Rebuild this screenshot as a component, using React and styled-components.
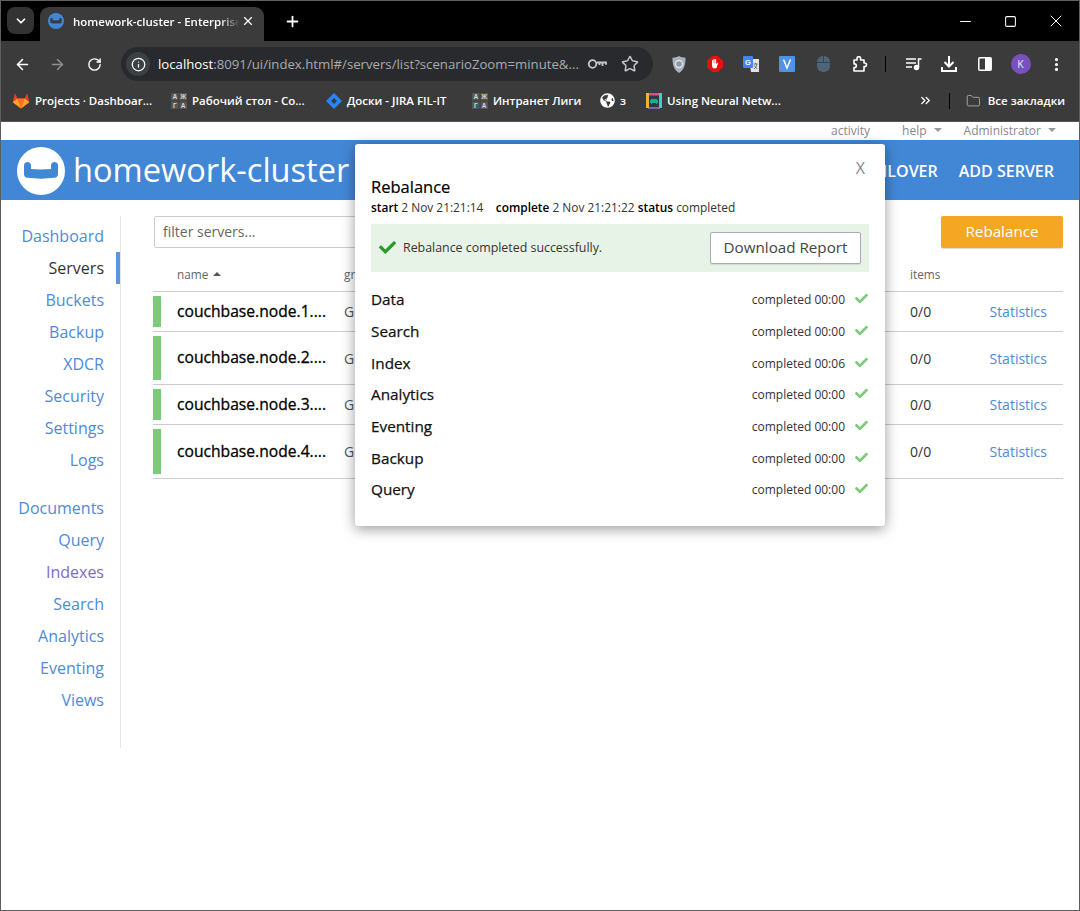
import React from 'react';
import styled, { createGlobalStyle } from 'styled-components';
import { ArrowLeft, ArrowRight, RotateCw, Info, Star, ChevronDown, Plus, X, Minus, Square, EllipsisVertical, ChevronsRight, Folder } from 'lucide-react';
import { FaCheck, FaGlobeAmericas } from 'react-icons/fa';

const GlobalStyle = createGlobalStyle`
  html, body { margin: 0; padding: 0; background: #fff; }
  body { font-family: "Open Sans", "Noto Sans", sans-serif; }
  * { box-sizing: border-box; }
`;

const Couch = ({ size, bg, fg }) => (
  <svg width={size} height={size} viewBox="0 0 48 48">
    <circle cx="24" cy="24" r="24" fill={bg} />
    <path d="M7 18.5C7 16.2 8.5 15 10.5 15S14 16.2 14 18.5V22c6.5.6 13.5.6 20 0v-3.5c0-2.3 1.500-3.500 3.500-3.500S41 16.200 41 18.500V27c0 2.200-1.200 3.500-3.300 3.800-9 1.100-18.400 1.100-27.400 0C8.200 30.500 7 29.200 7 27z" fill={fg} />
  </svg>
);

const Gitlab = () => (
  <svg width="18" height="17" viewBox="0 0 18 17">
    <path d="M9 16.500 0.700 10.300 2.900 1 5.400 6.500h7.200L15.100 1l2.200 9.300z" fill="#e24329" />
    <path d="M9 16.500 5.400 6.500h7.200z" fill="#fc6d26" />
    <path d="M9 16.500 0.700 10.300 5.400 6.500zM9 16.500l8.300-6.200-4.700-3.800z" fill="#fca326" />
  </svg>
);

const Liga = () => (
  <svg width="16" height="16" viewBox="0 0 16 16" fontFamily="Liberation Sans, sans-serif" fontSize="6.5" fontWeight="700" fill="#d6d6d6" textAnchor="middle">
    <rect width="7.5" height="7.5" fill="#555" />
    <rect x="8.5" width="7.5" height="7.5" fill="#555" />
    <rect y="8.5" width="7.5" height="7.5" fill="#555" />
    <rect x="8.5" y="8.5" width="7.5" height="7.5" fill="#555" />
    <text x="3.8" y="6.2">A</text>
    <text x="12.2" y="6.2">Ж</text>
    <text x="3.8" y="14.7">Г</text>
    <text x="12.2" y="14.7">А</text>
  </svg>
);

const Jira = () => (
  <svg width="16" height="16" viewBox="0 0 16 16">
    <path d="M8 0l8 8-8 8-8-8z" fill="#2684ff" />
    <path d="M8 5l3 3-3 3-3-3z" fill="#3b3b3b" />
  </svg>
);

const Invader = () => (
  <svg width="16" height="16" viewBox="0 0 16 16">
    <rect width="16" height="16" fill="#2c3a3c" />
    <rect width="16" height="2.5" fill="#d94f8a" />
    <rect y="14" x="2" width="12" height="2" fill="#8c5bb5" />
    <rect width="3" height="15" fill="#f0b13c" />
    <rect x="13" width="3" height="15" fill="#3fd0c0" />
    <path d="M5 6h6v1h1v3H4V7h1zM5 10h1v1H5zM10 10h1v1h-1z" fill="#1fa88a" />
  </svg>
);

const Key = () => (
  <svg width="20" height="12" viewBox="0 0 20 12" fill="none" stroke="#c7c7c7" strokeWidth="1.8">
    <circle cx="5.5" cy="6" r="3.8" />
    <path d="M9.5 4.500H19v2.200M15.500 4.500v3.500M12.500 4.500v2.500" />
  </svg>
);

const Shield = () => (
  <svg width="14" height="17" viewBox="0 0 14 17">
    <path d="M7 0c2 1.200 4 1.700 6.500 1.700C13.700 8.500 12 14 7 17 2 14 .3 8.500 .5 1.700 3 1.700 5 1.200 7 0z" fill="#aab2bd" />
    <circle cx="7" cy="8" r="3.5" fill="#8d96a3" stroke="#dfe3e8" strokeWidth="1.4" />
  </svg>
);

const Hand = () => (
  <svg width="16" height="16" viewBox="0 0 16 16">
    <path d="M5 0h6l5 5v6l-5 5H5l-5-5V5z" fill="#e8110f" />
    <path d="M5 8V4.500c0-.8 1.100-.8 1.100 0V7h.3V3.300c0-.8 1.200-.8 1.200 0V7h.3V3.700c0-.8 1.200-.8 1.200 0V8l.9-1c.6-.6 1.300 0 .9.600L9.800 11.500c-.4.700-1 1-1.800 1-2 0-3-1.200-3-3z" fill="#fff" />
  </svg>
);

const Translate = () => (
  <svg width="16" height="16" viewBox="0 0 16 16">
    <path d="M6 3h10v13H8z" fill="#dfe3e8" />
    <rect width="10" height="12" rx="1" fill="#4285f4" />
    <text x="5" y="8.5" fontFamily="Liberation Sans, sans-serif" fontSize="7.5" fontWeight="700" fill="#fff" textAnchor="middle">G</text>
    <path d="M10.500 8h4M12.500 7v1M11 13c1.500-1 2.500-2.500 2.800-5M11.500 9.500c.6 1.500 1.500 2.500 2.800 3" fill="none" stroke="#555" strokeWidth=".8" />
  </svg>
);

const Vimium = () => (
  <svg width="16" height="16" viewBox="0 0 16 16">
    <rect width="16" height="16" rx="1" fill="#4f94e4" />
    <path d="M4.500 3.500 8 12l3.500-8.500" fill="none" stroke="#fff" strokeWidth="1.5" />
  </svg>
);

const Mouse = () => (
  <svg width="13" height="16" viewBox="0 0 13 16">
    <rect width="13" height="16" rx="6" fill="#4d6579" />
    <path d="M6.500 0v6.500M0 6.500h13" stroke="#3b3b3b" strokeWidth=".8" />
  </svg>
);

const Puzzle = () => (
  <svg width="17" height="16" viewBox="0 0 17 16" fill="none" stroke="#fff" strokeWidth="1.6" strokeLinejoin="round">
    <path d="M3 4h3V2.500a1.800 1.800 0 0 1 3.600 0V4H13v3h.7a1.800 1.800 0 0 1 0 3.600H13V15H3v-3.500h.5a1.800 1.800 0 0 0 0-3.600H3z" />
  </svg>
);

const Queue = () => (
  <svg width="16" height="14" viewBox="0 0 16 14" fill="none" stroke="#fff" strokeWidth="1.5">
    <path d="M0 2h10M0 6h10M0 10h6M12.500 10V2h3" />
    <circle cx="10.500" cy="10.500" r="2" fill="#fff" />
  </svg>
);

const DownloadIcon = () => (
  <svg width="16" height="16" viewBox="0 0 16 16" fill="none" stroke="#fff" strokeWidth="2">
    <path d="M8 0v10M3.500 6l4.500 4.500L12.500 6M1 11v4h14v-4" />
  </svg>
);

const SidePanel = () => (
  <svg width="14" height="14" viewBox="0 0 14 14">
    <rect x=".8" y=".8" width="12.4" height="12.4" rx="1" fill="none" stroke="#fff" strokeWidth="1.5" />
    <rect x="7" y="1" width="6" height="12" fill="#fff" />
  </svg>
);

const Window = styled.div`
  width: 1080px;
  height: 911px;
  border: 1px solid #5f5f5f;
  display: flex;
  flex-direction: column;
  position: relative;
  overflow: hidden;
  background: #fff;
`;

const TabStrip = styled.div`
  height: 40px;
  background: #000;
  display: flex;
  align-items: flex-end;
  padding-left: 6px;
  flex: none;
`;

const TabSwitcher = styled.div`
  width: 27px;
  height: 27px;
  margin-bottom: 7px;
  border-radius: 8px;
  background: #333;
  color: #fff;
  display: flex;
  align-items: center;
  justify-content: center;
`;

const Tab = styled.div`
  width: 224px;
  height: 34px;
  margin-left: 6px;
  background: #3b3b3b;
  border-radius: 9px 9px 0 0;
  display: flex;
  align-items: center;
  padding: 0 8px 6px 8px;
  color: #fff;
`;

const TabTitle = styled.div`
  width: 168px;
  margin-left: 9px;
  font-size: 11.5px;
  font-weight: 600;
  white-space: nowrap;
  overflow: hidden;
  mask-image: linear-gradient(to right, #000 88%, transparent 99%);
`;

const NewTab = styled.div`
  height: 34px;
  margin-left: 20px;
  padding-bottom: 6px;
  color: #fff;
  display: flex;
  align-items: center;
`;

const WindowControls = styled.div`
  margin-left: auto;
  height: 40px;
  display: flex;
  align-items: center;
  color: #fff;
`;

const WindowControl = styled.div`
  width: 45.5px;
  display: flex;
  justify-content: center;
`;

const Toolbar = styled.div`
  height: 41px;
  background: #3b3b3b;
  display: flex;
  align-items: center;
  flex: none;
  padding: 5px 0 0 4px;
`;

const NavButton = styled.div`
  width: 35px;
  display: flex;
  justify-content: center;
  color: ${p => (p.$dim ? '#8f8f8f' : '#fff')};
  margin-right: ${p => p.$gap || 0}px;
`;

const Omnibox = styled.div`
  width: 532px;
  height: 34px;
  margin-left: 9px;
  border-radius: 17px;
  background: #282a2d;
  display: flex;
  align-items: center;
  padding: 0 14px 0 5px;
  font-size: 13.2px;
  color: #a9abad;
`;

const InfoBubble = styled.div`
  width: 24px;
  height: 24px;
  border-radius: 50%;
  background: #3c3f43;
  color: #fff;
  display: flex;
  align-items: center;
  justify-content: center;
  margin-right: 8px;
  flex: none;
`;

const Url = styled.div`
  flex: 1;
  white-space: nowrap;
  overflow: hidden;
  width: 0;
`;

const Host = styled.span`
  color: #fff;
`;

const OmniIcons = styled.div`
  display: flex;
  align-items: center;
  gap: 14px;
  margin-left: 6px;
  color: #c7c7c7;
`;

const Extensions = styled.div`
  margin-left: 8px;
  display: flex;
  align-items: center;
  flex: 1;
`;

const Extension = styled.div`
  width: ${p => p.$w || 36}px;
  display: flex;
  justify-content: center;
  align-items: center;
  color: #fff;
  flex: none;
`;

const Divider = styled.div`
  width: 1px;
  height: 16px;
  background: #000;
  flex: none;
`;

const Avatar = styled.div`
  width: 20px;
  height: 20px;
  border-radius: 50%;
  background: #7a50c0;
  color: #f0e8ff;
  font-size: 10.5px;
  display: flex;
  align-items: center;
  justify-content: center;
`;

const Bookmarks = styled.div`
  height: 40px;
  background: #3b3b3b;
  border-bottom: 1px solid #555;
  display: flex;
  align-items: center;
  flex: none;
  padding: 0 0 2px 11px;
  color: #fff;
  font-size: 11.5px;
  font-weight: 600;
`;

const Bookmark = styled.div`
  display: flex;
  align-items: center;
  gap: ${p => p.$gap || 5}px;
  white-space: nowrap;
  width: ${p => p.$w}px;
  flex: none;
`;

const BookmarkTail = styled.div`
  margin-left: auto;
  display: flex;
  align-items: center;
  padding-right: 14px;
`;

const Page = styled.div`
  flex: 1;
  display: flex;
  flex-direction: column;
  color: #000;
`;

const TopLinks = styled.div`
  height: 18px;
  display: flex;
  justify-content: flex-end;
  align-items: center;
  padding: 0 23px 2px 0;
  font-size: 12px;
  color: #888;
`;

const TopLink = styled.span`
  display: flex;
  align-items: center;
  gap: 7px;
  margin-right: ${p => p.$gap || 0}px;
`;

const Caret = styled.i`
  display: inline-block;
  width: 0;
  height: 0;
  border-left: 4px solid transparent;
  border-right: 4px solid transparent;
  border-bottom: ${p => (p.$up ? '4px solid #555' : 'none')};
  border-top: ${p => (p.$up ? 'none' : '4px solid #999')};
`;

const Header = styled.header`
  height: 60px;
  background: #4287d6;
  display: flex;
  align-items: center;
  padding: 2px 25px 0 16px;
  color: #fff;
`;

const ClusterName = styled.div`
  font-size: 32.6px;
  margin-left: 8px;
  line-height: 1;
  margin-top: -2px;
`;

const HeaderActions = styled.div`
  margin-left: auto;
  display: flex;
  gap: 21px;
  font-size: 16px;
  font-weight: 600;
`;

const Body = styled.div`
  flex: 1;
  display: flex;
  padding-top: 16px;
`;

const Sidebar = styled.nav`
  width: 120px;
  height: 532px;
  padding-top: 4px;
  border-right: 1px solid #e6e6e6;
  flex: none;
  text-align: right;
`;

const NavGroup = styled.div`
  margin-bottom: 16px;
`;

const NavItem = styled.div`
  height: 32px;
  line-height: 32px;
  font-size: 16px;
  padding-right: 16px;
  color: ${p => (p.$active ? '#333' : p.$purple ? '#7e6bc9' : '#4f8ad8')};
  position: relative;
  ${p => p.$active && `
    &::after {
      content: '';
      position: absolute;
      right: 0;
      top: 0;
      width: 4px;
      height: 32px;
      background: #5e94dc;
    }
  `}
`;

const Main = styled.main`
  width: 910px;
  margin-left: 32px;
  flex: none;
`;

const Controls = styled.div`
  display: flex;
  justify-content: space-between;
  align-items: flex-start;
`;

const Filter = styled.div`
  width: 400px;
  height: 32px;
  margin-left: 1px;
  border: 1px solid #ccc;
  border-radius: 2px;
  font-size: 14px;
  color: #666;
  padding: 0 8px;
  line-height: 29px;
`;

const RebalanceButton = styled.div`
  width: 122px;
  height: 32px;
  background: #f5a623;
  border-radius: 2px;
  box-shadow: 0 1px 1px rgba(0, 0, 0, .15);
  color: #fff;
  font-size: 15.2px;
  text-align: center;
  line-height: 30px;
`;

const columns = '24px 167px 566px 79px 1fr';

const HeadRow = styled.div`
  display: grid;
  grid-template-columns: ${columns};
  height: 44px;
  align-items: center;
  padding-top: 8px;
  border-bottom: 1px solid #ccc;
  font-size: 11.8px;
  color: #666;
`;

const NameHead = styled.div`
  grid-column: 2;
  display: flex;
  align-items: center;
  gap: 5px;
`;

const Row = styled.div`
  display: grid;
  grid-template-columns: ${columns};
  height: ${p => p.$h}px;
  padding: 4px 0;
  border-bottom: 1px solid #ccc;
  align-items: center;
  font-size: 14px;
`;

const Status = styled.div`
  width: 8px;
  height: 100%;
  background: #7fc97a;
`;

const NodeName = styled.div`
  font-size: 15.65px;
  font-weight: 500;
  -webkit-text-stroke: .3px #000;
  white-space: nowrap;
  margin-top: -2px;
`;

const Group = styled.div`
  color: #555;
`;

const Stat = styled.div`
  color: #333;
`;

const StatsLink = styled.div`
  color: #4f8ad8;
  text-align: right;
  padding-right: 16px;
`;

const Modal = styled.div`
  position: absolute;
  left: 354px;
  top: 143px;
  width: 530px;
  height: 382px;
  background: #fff;
  border-radius: 3px;
  box-shadow: 0 3px 14px rgba(0, 0, 0, .4);
  padding: 33px 16px 0;
  color: #000;
`;

const CloseMark = styled.div`
  position: absolute;
  right: 20px;
  top: 13px;
  font-size: 16px;
  color: #888;
`;

const ModalTitle = styled.h2`
  margin: 0;
  font-size: 16.5px;
  font-weight: 400;
  line-height: 19px;
  -webkit-text-stroke: .2px #000;
`;

const Meta = styled.div`
  margin-top: 3px;
  font-size: 11.9px;
  line-height: 16px;
  color: #333;
  white-space: pre;
`;

const MetaLabel = styled.b`
  font-weight: 600;
  color: #000;
`;

const Alert = styled.div`
  margin-top: 9px;
  height: 48px;
  background: #e8f3e8;
  display: flex;
  align-items: center;
  padding: 0 8px;
  font-size: 12.4px;
  color: #333;
  gap: 7px;
`;

const AlertText = styled.span`
  margin-top: -2px;
`;

const AlertCheck = styled.span`
  color: #2a9a2a;
  display: flex;
  margin-top: -1px;
`;

const ReportButton = styled.div`
  margin-left: auto;
  width: 151px;
  height: 32px;
  border: 1px solid #aab;
  border-radius: 2px;
  background: #fff;
  box-shadow: 0 1px 1px rgba(0, 0, 0, .1);
  font-size: 15.2px;
  text-align: center;
  line-height: 29px;
  color: #444;
`;

const Services = styled.div`
  margin-top: 11.4px;
`;

const ServiceRow = styled.div`
  height: 31.7px;
  display: flex;
  align-items: center;
  justify-content: space-between;
`;

const ServiceName = styled.div`
  font-size: 15.3px;
  font-weight: 500;
  -webkit-text-stroke: .25px #111;
  color: #111;
`;

const ServiceState = styled.div`
  display: flex;
  align-items: center;
  gap: 10px;
  padding-right: 1px;
  margin-top: 1px;
  font-size: 12px;
  color: #333;
`;

const ServiceCheck = styled.span`
  color: #7fc97a;
  display: flex;
  margin-top: -2px;
`;

const bookmarks = [
  { w: 159, icon: <Gitlab />, label: 'Projects · Dashboar...' },
  { w: 155, icon: <Liga />, label: 'Рабочий стол - Co...' },
  { w: 146, icon: <Jira />, label: 'Доски - JIRA FIL-IT' },
  { w: 128, icon: <Liga />, label: 'Интранет Лиги' },
  { w: 46, icon: <FaGlobeAmericas size={15} />, label: 'з' },
  { w: 200, icon: <Invader />, label: 'Using Neural Netw...' },
];

const navTop = ['Dashboard', 'Servers', 'Buckets', 'Backup', 'XDCR', 'Security', 'Settings', 'Logs'];
const navBottom = ['Documents', 'Query', 'Indexes', 'Search', 'Analytics', 'Eventing', 'Views'];

const nodes = [
  { name: 'couchbase.node.1....', h: 40 },
  { name: 'couchbase.node.2....', h: 53 },
  { name: 'couchbase.node.3....', h: 40 },
  { name: 'couchbase.node.4....', h: 54 },
];

const services = [
  ['Data', '00:00'],
  ['Search', '00:00'],
  ['Index', '00:06'],
  ['Analytics', '00:00'],
  ['Eventing', '00:00'],
  ['Backup', '00:00'],
  ['Query', '00:00'],
];

const BrowserChrome = () => (
  <>
    <TabStrip>
      <TabSwitcher><ChevronDown size={14} strokeWidth={3} /></TabSwitcher>
      <Tab>
        <Couch size={16} bg="#4287d6" fg="#3b3b3b" />
        <TabTitle>homework-cluster - Enterprise</TabTitle>
        <X size={14} strokeWidth={2} />
      </Tab>
      <NewTab><Plus size={17} strokeWidth={2.5} /></NewTab>
      <WindowControls>
        <WindowControl><Minus size={17} strokeWidth={1.4} /></WindowControl>
        <WindowControl><Square size={13} strokeWidth={1.9} /></WindowControl>
        <WindowControl><X size={20} strokeWidth={1.2} /></WindowControl>
      </WindowControls>
    </TabStrip>
    <Toolbar>
      <NavButton><ArrowLeft size={17} strokeWidth={2.2} /></NavButton>
      <NavButton $dim $gap={2}><ArrowRight size={17} strokeWidth={2.2} /></NavButton>
      <NavButton><RotateCw size={15} strokeWidth={2.2} /></NavButton>
      <Omnibox>
        <InfoBubble><Info size={15} strokeWidth={2} /></InfoBubble>
        <Url><Host>localhost</Host>:8091/ui/index.html#/servers/list?scenarioZoom=minute&...</Url>
        <OmniIcons>
          <Key />
          <Star size={18} strokeWidth={2} />
        </OmniIcons>
      </Omnibox>
      <Extensions>
        <Extension><Shield /></Extension>
        <Extension><Hand /></Extension>
        <Extension><Translate /></Extension>
        <Extension><Vimium /></Extension>
        <Extension><Mouse /></Extension>
        <Extension><Puzzle /></Extension>
        <Extension $w={17}><Divider /></Extension>
        <Extension $w={40}><Queue /></Extension>
        <Extension $w={29}><DownloadIcon /></Extension>
        <Extension $w={44}><SidePanel /></Extension>
        <Extension $w={27}><Avatar>K</Avatar></Extension>
        <Extension $w={45}><EllipsisVertical size={17} strokeWidth={2.5} /></Extension>
      </Extensions>
    </Toolbar>
    <Bookmarks>
      {bookmarks.map(b => (
        <Bookmark key={b.label} $w={b.w}>{b.icon}{b.label}</Bookmark>
      ))}
      <BookmarkTail>
        <ChevronsRight size={15} strokeWidth={2.2} />
        <Extension $w={33}><Divider /></Extension>
        <Bookmark $w={99} $gap={7}><Folder size={18} color="#aaa" strokeWidth={1.5} />Все закладки</Bookmark>
      </BookmarkTail>
    </Bookmarks>
  </>
);

const RebalanceModal = () => (
  <Modal>
    <CloseMark>X</CloseMark>
    <ModalTitle>Rebalance</ModalTitle>
    <Meta>
      <MetaLabel>start</MetaLabel> 2 Nov 21:21:14    <MetaLabel>complete</MetaLabel> 2 Nov 21:21:22 <MetaLabel>status</MetaLabel> completed
    </Meta>
    <Alert>
      <AlertCheck><FaCheck size={17} /></AlertCheck>
      <AlertText>Rebalance completed successfully.</AlertText>
      <ReportButton>Download Report</ReportButton>
    </Alert>
    <Services>
      {services.map(([name, time]) => (
        <ServiceRow key={name}>
          <ServiceName>{name}</ServiceName>
          <ServiceState>
            completed {time}
            <ServiceCheck><FaCheck size={13} /></ServiceCheck>
          </ServiceState>
        </ServiceRow>
      ))}
    </Services>
  </Modal>
);

const App = () => (
  <Window>
    <GlobalStyle />
    <BrowserChrome />
    <Page>
      <TopLinks>
        <TopLink $gap={32}>activity</TopLink>
        <TopLink $gap={22}>help <Caret /></TopLink>
        <TopLink>Administrator <Caret /></TopLink>
      </TopLinks>
      <Header>
        <Couch size={48} bg="#fff" fg="#4287d6" />
        <ClusterName>homework-cluster</ClusterName>
        <HeaderActions>
          <span>FAILOVER</span>
          <span>ADD SERVER</span>
        </HeaderActions>
      </Header>
      <Body>
        <Sidebar>
          <NavGroup>
            {navTop.map(n => <NavItem key={n} $active={n === 'Servers'}>{n}</NavItem>)}
          </NavGroup>
          <NavGroup>
            {navBottom.map(n => <NavItem key={n} $purple={n === 'Indexes'}>{n}</NavItem>)}
          </NavGroup>
        </Sidebar>
        <Main>
          <Controls>
            <Filter>filter servers...</Filter>
            <RebalanceButton>Rebalance</RebalanceButton>
          </Controls>
          <HeadRow>
            <NameHead>name <Caret $up /></NameHead>
            <div>group</div>
            <div>items</div>
          </HeadRow>
          {nodes.map(n => (
            <Row key={n.name} $h={n.h}>
              <Status />
              <NodeName>{n.name}</NodeName>
              <Group>Group 1</Group>
              <Stat>0/0</Stat>
              <StatsLink>Statistics</StatsLink>
            </Row>
          ))}
        </Main>
      </Body>
    </Page>
    <RebalanceModal />
  </Window>
);

export default App;
